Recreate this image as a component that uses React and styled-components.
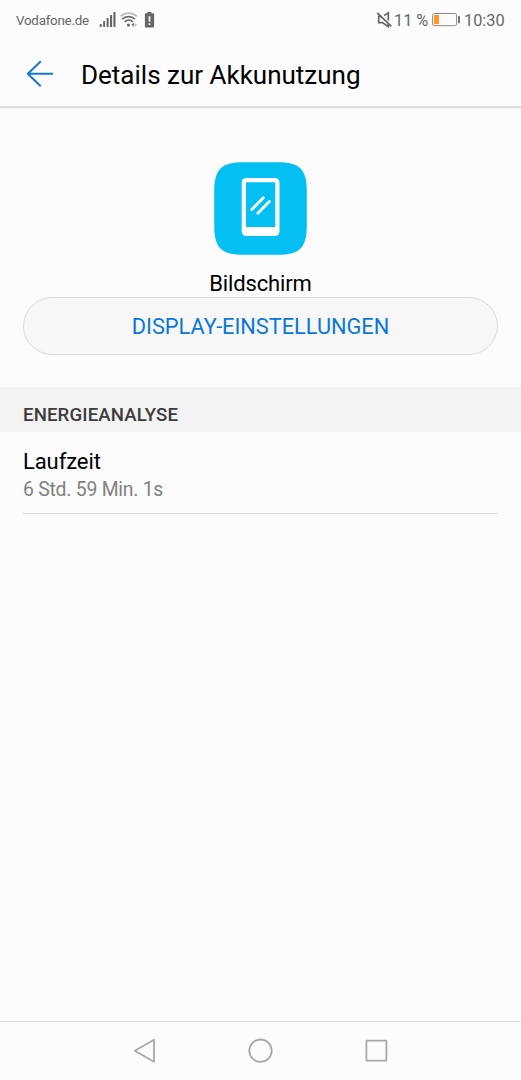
import React from "react";
import styled, { createGlobalStyle } from "styled-components";

const GlobalStyle = createGlobalStyle`
  * {
    box-sizing: border-box;
  }

  body {
    margin: 0;
    background-color: #fcfcfc;
    font-family: Roboto, "Liberation Sans", sans-serif;
  }
`;

const Screen = styled.div`
  display: flex;
  flex-direction: column;
  height: 100vh;
  background-color: #fcfcfc;
  overflow: hidden;
`;

const StatusBar = styled.div`
  display: flex;
  justify-content: space-between;
  height: 40px;
  padding: 0 16px;
  color: #666;
`;

const StatusGroup = styled.div`
  display: flex;
  align-items: center;
`;

const Carrier = styled.span`
  width: 83px;
  padding-top: 1px;
  font-size: 13.4px;
  letter-spacing: -0.26px;
  line-height: 40px;
  white-space: nowrap;
`;

const StatusText = styled.span`
  width: ${({ $width }) => $width}px;
  padding-top: 1px;
  font-size: 16.3px;
  line-height: 40px;
  white-space: nowrap;
`;

const StatusIcon = styled.svg`
  display: block;
  flex: none;
  height: 40px;
`;

const Header = styled.header`
  display: flex;
  align-items: center;
  height: 68px;
  padding: 2px 26px 0;
  border-bottom: 2px solid #dcdcdc;
  box-shadow: 0 1px 0 #f2f2f2;
`;

const BackButton = styled.button`
  width: 55px;
  height: 28px;
  padding: 0;
  border: none;
  background: none;
  cursor: pointer;

  svg {
    display: block;
  }
`;

const Title = styled.h1`
  margin: 0;
  padding-top: 2px;
  font-size: 26px;
  font-weight: 400;
  line-height: 32px;
  color: #000;
  white-space: nowrap;
`;

const Content = styled.main`
  flex: 1;
`;

const Summary = styled.section`
  display: flex;
  flex-direction: column;
  align-items: center;
  height: 279px;
  padding: 54px 23px 0;
`;

const SummaryIcon = styled.svg`
  display: block;
  flex: none;
`;

const AppName = styled.div`
  height: 42px;
  padding-top: 15px;
  font-size: 22px;
  letter-spacing: -0.15px;
  line-height: 28px;
  color: #000;
`;

const SettingsButton = styled.button`
  width: 100%;
  height: 58px;
  flex: none;
  padding: 1px 0 0;
  border: 1px solid #dcdcdc;
  border-radius: 29px;
  background-color: #f7f7f7;
  font-family: inherit;
  font-size: 21.8px;
  letter-spacing: -0.04px;
  color: #0a78d8;
  cursor: pointer;
`;

const SectionTitle = styled.h2`
  height: 45px;
  margin: 0;
  padding: 6px 23px 0;
  background-color: #f3f3f3;
  font-size: 18.6px;
  font-weight: 500;
  letter-spacing: 0.14px;
  line-height: 44px;
  color: #3c3c3c;
`;

const Row = styled.div`
  height: 82px;
  margin: 0 23px;
  padding-top: 16px;
  border-bottom: 1px solid #dfdfdf;
`;

const RowLabel = styled.div`
  font-size: 22px;
  letter-spacing: -0.1px;
  line-height: 28px;
  color: #000;
`;

const RowValue = styled.div`
  font-size: 19.4px;
  letter-spacing: -0.24px;
  line-height: 28px;
  color: #818181;
`;

const NavBar = styled.nav`
  display: flex;
  justify-content: center;
  height: 59px;
  padding-right: 1px;
  border-top: 1px solid #e2e2e2;
`;

const NavButton = styled.button`
  width: 116px;
  padding: 0;
  border: none;
  background: none;
  cursor: pointer;

  svg {
    display: block;
    margin: 0 auto;
  }
`;

const SignalIcon = () => (
  <StatusIcon width="21" viewBox="0 0 21 40" fill="#666">
    <rect x="0.8" y="24" width="1.9" height="3" />
    <rect x="4.2" y="21" width="1.9" height="6" />
    <rect x="7.6" y="18" width="2" height="9" />
    <rect x="11" y="15" width="2.1" height="12" />
    <rect x="14.4" y="12" width="2.1" height="15" />
  </StatusIcon>
);

const WifiIcon = () => (
  <StatusIcon width="24" viewBox="0 0 24 40" fill="none" strokeWidth="1.7">
    <path d="M0.6 16.3C5 12 12.4 12 16.8 16.3" stroke="#bdbdbd" />
    <path d="M2.2 19.2C5.6 15.7 11.5 15.7 14.9 19.2" stroke="#666" />
    <path d="M4.6 22C7 19.6 10.4 19.6 12.8 22" stroke="#666" />
    <circle cx="8.5" cy="25" r="1.6" fill="#666" />
    <path d="M13.8 22.7v4.2l-2.2-2.1z" fill="#666" />
    <path d="M14.6 22.7v4.2l2.2-2.1z" fill="#bdbdbd" />
  </StatusIcon>
);

const BatteryAlertIcon = () => (
  <StatusIcon width="12" viewBox="0 0 12 40">
    <path d="M3.4 12h4v1.6h-4z" fill="#666" />
    <rect x="0.9" y="13.3" width="9.2" height="14.2" rx="1" fill="#666" />
    <path d="M5.5 16.2v5.6M5.5 23.2v1.9" stroke="#fcfcfc" strokeWidth="1.7" />
  </StatusIcon>
);

const MuteIcon = () => (
  <StatusIcon width="18" viewBox="0 0 18 40" fill="none" stroke="#666" strokeWidth="1.7">
    <path d="M5.2 16.4H2.7v6.2h3.7l5.9 4v-3M8 15.6l4.3-2.7v7.6" />
    <path d="M1.2 12.9l14.2 13.4" />
  </StatusIcon>
);

const BatteryIcon = () => (
  <StatusIcon width="32" viewBox="0 0 32 40">
    <rect x="0.6" y="13.5" width="24" height="12.2" rx="1.8" fill="none" stroke="#8a8a8a" />
    <rect x="2" y="15" width="5" height="9.2" fill="#ff9a1f" />
    <rect x="26" y="16" width="2" height="7.2" rx="0.5" fill="#777" />
  </StatusIcon>
);

const ScreenAppIcon = () => (
  <SummaryIcon width="93" height="93" viewBox="0 0 93 93">
    <path
      d="M63 0.2C86 0.2 92.8 7 92.8 30V63C92.8 86 86 92.8 63 92.8H30C7 92.8 0.2 86 0.2 63V30C0.2 7 7 0.2 30 0.2Z"
      fill="#03bff2"
    />
    <rect x="27.7" y="16" width="37.8" height="58" rx="4.5" fill="#fff" />
    <rect x="32" y="20.3" width="29.3" height="44.7" rx="0.8" fill="#03bff2" />
    <path d="M37.7 47.6l11.6-11.8M43.8 51.3l11.6-11.8" stroke="#fff" strokeWidth="2.8" strokeLinecap="round" />
  </SummaryIcon>
);

const App = () => {
  return (
    <>
      <GlobalStyle />
      <Screen>
        <StatusBar>
          <StatusGroup>
            <Carrier>Vodafone.de</Carrier>
            <SignalIcon />
            <WifiIcon />
            <BatteryAlertIcon />
          </StatusGroup>
          <StatusGroup>
            <MuteIcon />
            <StatusText $width={38}>11 %</StatusText>
            <BatteryIcon />
            <StatusText $width={41}>10:30</StatusText>
          </StatusGroup>
        </StatusBar>

        <Header>
          <BackButton aria-label="Zurück">
            <svg width="28" height="28" viewBox="0 0 28 28" fill="none" stroke="#1678d3" strokeWidth="2">
              <path d="M14.8 1.2L1.8 13.7l12.9 12.6M1.8 13.7H27" strokeLinejoin="round" />
            </svg>
          </BackButton>
          <Title>Details zur Akkunutzung</Title>
        </Header>

        <Content>
          <Summary>
            <ScreenAppIcon />
            <AppName>Bildschirm</AppName>
            <SettingsButton>DISPLAY-EINSTELLUNGEN</SettingsButton>
          </Summary>

          <SectionTitle>ENERGIEANALYSE</SectionTitle>
          <Row>
            <RowLabel>Laufzeit</RowLabel>
            <RowValue>6 Std. 59 Min. 1s</RowValue>
          </Row>
        </Content>

        <NavBar>
          <NavButton aria-label="Zurück">
            <svg width="30" height="30" viewBox="0 0 30 30" fill="none" stroke="#a8a8a8" strokeWidth="1.8">
              <path d="M25 3.8v22L5.8 14.8z" strokeLinejoin="round" />
            </svg>
          </NavButton>
          <NavButton aria-label="Startseite">
            <svg width="30" height="30" viewBox="0 0 30 30" fill="none" stroke="#a8a8a8" strokeWidth="1.8">
              <circle cx="15.5" cy="14.7" r="11.2" />
            </svg>
          </NavButton>
          <NavButton aria-label="Übersicht">
            <svg width="30" height="30" viewBox="0 0 30 30" fill="none" stroke="#a8a8a8" strokeWidth="1.8">
              <rect x="5.4" y="4.6" width="20" height="20" rx="0.6" />
            </svg>
          </NavButton>
        </NavBar>
      </Screen>
    </>
  );
};

export default App;
